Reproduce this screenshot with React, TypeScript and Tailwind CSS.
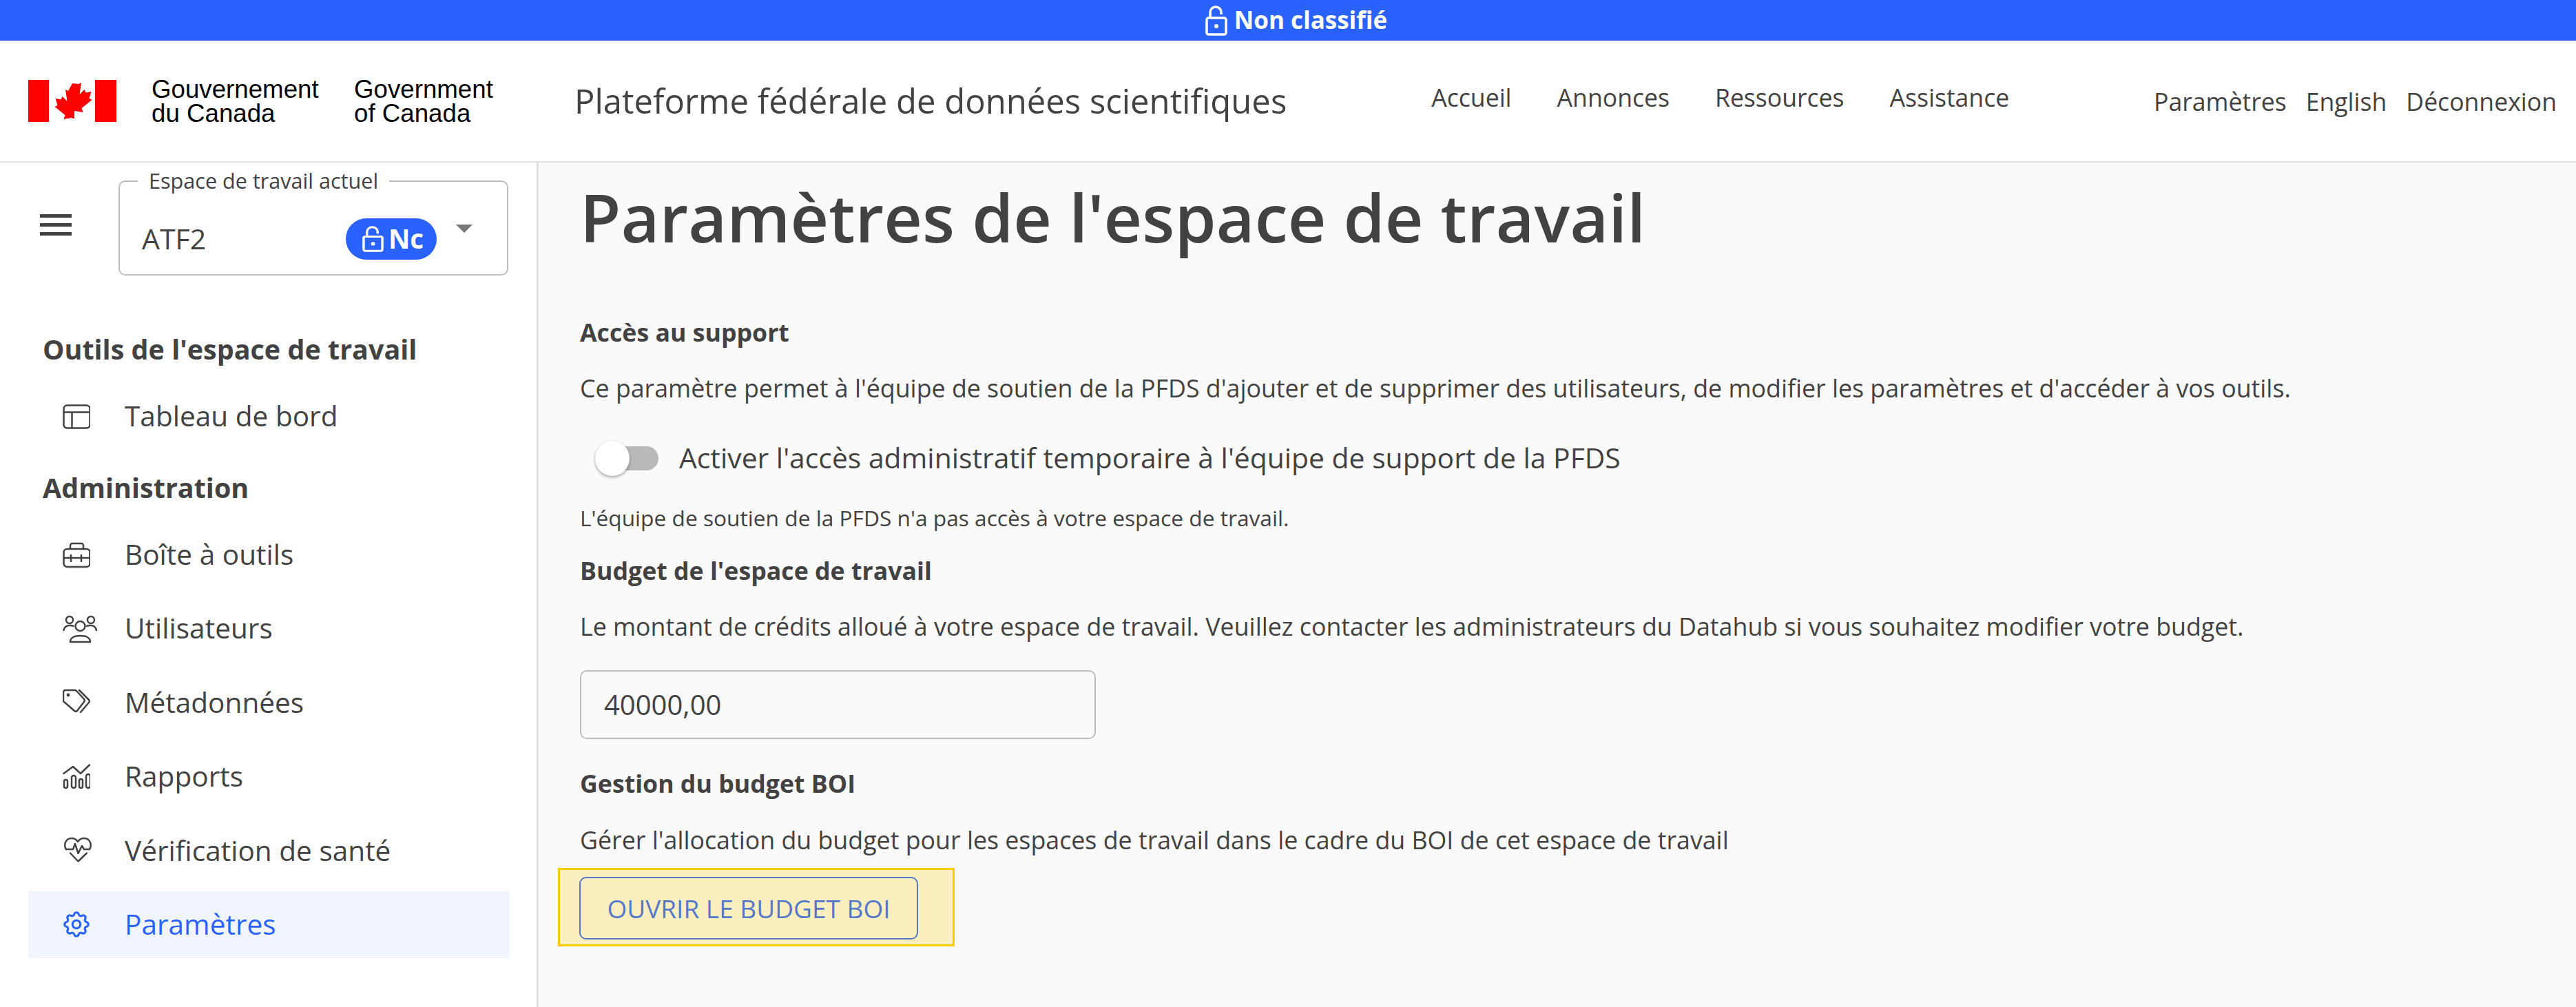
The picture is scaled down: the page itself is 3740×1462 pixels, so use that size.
import React from 'react';
import { TbSettings } from 'react-icons/tb';

const OPEN = '"Open Sans", "Noto Sans", sans-serif';
const ARIAL = '"Liberation Sans", Arial, sans-serif';

const NavLink = ({ label }: { label: string }) => (
  <a className="text-[35.600px] text-[#424242]">{label}</a>
);

const LockIcon = ({ w, h }: { w: number; h: number }) => (
  <svg width={w} height={h} viewBox="0 0 32 44" preserveAspectRatio="none" fill="none" stroke="currentColor" strokeWidth="3.500">
    <rect x="2" y="18" width="28" height="24" rx="2.500" />
    <path d="M7 18V10a8 8 0 0 1 16 0v3" />
    <circle cx="16" cy="30" r="3" fill="currentColor" stroke="none" />
  </svg>
);

const MapleFlag = () => (
  <svg width="128" height="61" viewBox="0 0 128 61" className="shrink-0">
    <rect x="0" y="0" width="30" height="61" fill="#ff0000" />
    <rect x="97" y="0" width="31" height="61" fill="#ff0000" />
    <path
      fill="#ff0000"
      d="M64 5l-6 11-4-2 2.500 17-7-7-2 4.500-8-1.500 3 10-4 2 15 12-2 6 12-2 .500 0V56h3V45l12.500 2-2-6 15-12-4-2 3-10-8 1.500-2-4.500-7 7 2.500-17-4 2z"
    />
  </svg>
);

const IconBox = ({ children, w = 40, h = 40 }: { children: React.ReactNode; w?: number; h?: number }) => (
  <svg width={w} height={h} viewBox={`0 0 ${w} ${h}`} fill="none" stroke="currentColor" strokeWidth="2.500" strokeLinecap="round" strokeLinejoin="round">
    {children}
  </svg>
);

const TableIcon = () => (
  <IconBox>
    <rect x="1.500" y="3.500" width="38" height="33" rx="5" />
    <path d="M1.500 13.500h38M13.500 13.500v23" />
  </IconBox>
);

const ToolboxIcon = () => (
  <IconBox>
    <rect x="1.500" y="11" width="38" height="26" rx="5" />
    <path d="M11 11V6a3 3 0 0 1 3-3h13a3 3 0 0 1 3 3v5M1.500 24h38M12 20v9M27 20v9" />
  </IconBox>
);

const UsersIcon = () => (
  <IconBox w={50} h={44}>
    <circle cx="10" cy="9" r="5" />
    <circle cx="41" cy="9" r="5" />
    <circle cx="25.500" cy="18" r="7" />
    <path d="M11 41c0-6 6-9 14.500-9s14.500 3 14.500 9zM1.500 24c1-5 5-7 9-7 2 0 4 .5 5 1M49 24c-1-5-5-7-9-7-2 0-4 .5-5 1" />
  </IconBox>
);

const TagsIcon = () => (
  <IconBox>
    <path d="M4 2h13a4 4 0 0 1 3 1l11 12a3 3 0 0 1 0 4L21 32a3 3 0 0 1-4 0L2 19a3 3 0 0 1-1-2V5a3 3 0 0 1 3-3z" />
    <path d="M24 2l14 14a3 3 0 0 1 0 4L26 34" />
    <circle cx="8" cy="9" r="1.200" fill="currentColor" />
  </IconBox>
);

const ReportsIcon = () => (
  <IconBox>
    <path d="M1.500 15L15 5l11 10L39 2.500" />
    <rect x="2" y="24" width="5" height="12" rx="2.500" />
    <rect x="13" y="18" width="6" height="18" rx="3" />
    <rect x="24" y="23" width="5" height="13" rx="2.500" />
    <rect x="34" y="16" width="6" height="20" rx="3" />
  </IconBox>
);

const HeartIcon = () => (
  <IconBox w={44} h={40}>
    <path d="M5 18C1 12 4 2 13 2c4 0 7 2 9 5 2-3 5-5 9-5 9 0 12 10 8 16h-8l-3-5-5.500 11L18 10l-3 8H5z" />
    <path d="M11 23.500L22.500 35.500 35 23.500" />
  </IconBox>
);

const SideItem = ({ label, icon, active }: { label: string; icon: React.ReactNode; active?: boolean }) => (
  <div className={`mb-[10.400px] flex h-[97px] items-center pl-[50px] ${active ? 'bg-[#f0f5ff] text-[#2962ff]' : 'text-[#424242]'}`}>
    <div className="flex w-[90px] items-center">{icon}</div>
    <span className="text-[40.600px]">{label}</span>
  </div>
);

const SideHeading = ({ label }: { label: string }) => (
  <div className="flex h-[48px] items-center pl-[21px] text-[39.500px] font-bold text-[#424242]">{label}</div>
);

export default function App() {
  return (
    <div className="flex h-[1462px] w-[3740px] flex-col overflow-hidden bg-white" style={{ fontFamily: OPEN }}>
      <div className="flex h-[59px] items-center justify-center gap-[10px] bg-[#2962ff] pl-[24px] text-[35px] font-bold text-white">
        <LockIcon w={32} h={44} />
        <span>Non classifié</span>
      </div>

      <header className="flex h-[177px] items-center border-b-[2px] border-[#e0e0e0] pl-[41px] pr-[28px]">
        <MapleFlag />
        <div className="ml-[51px] w-[294px] text-[36.700px] leading-[35px] text-black" style={{ fontFamily: ARIAL }}>
          Gouvernement<br />du Canada
        </div>
        <div className="w-[320px] text-[36.700px] leading-[35px] text-black" style={{ fontFamily: ARIAL }}>
          Government<br />of Canada
        </div>
        <div className="text-[49px] font-medium text-[#424242]">Plateforme fédérale de données scientifiques</div>
        <nav className="ml-[210px] flex gap-[66px] pb-[10px]">
          <NavLink label="Accueil" />
          <NavLink label="Annonces" />
          <NavLink label="Ressources" />
          <NavLink label="Assistance" />
        </nav>
        <div className="ml-auto flex gap-[28px] pt-[2px]">
          <NavLink label="Paramètres" />
          <NavLink label="English" />
          <NavLink label="Déconnexion" />
        </div>
      </header>

      <div className="flex flex-1">
        <aside className="w-[782px] shrink-0 border-r-[3px] border-[#e0e0e0] pl-[41px] pr-[40px] pt-[26px]">
          <div className="flex items-center">
            <div className="mb-[10px] ml-[17px] flex w-[46px] flex-col gap-[8px]">
              <div className="h-[5px] bg-[#424242]" />
              <div className="h-[5px] bg-[#424242]" />
              <div className="h-[5px] bg-[#424242]" />
            </div>
            <div className="relative ml-[68px] flex h-[138px] w-[566px] items-center rounded-[10px] border-2 border-[#bdbdbd] pl-[32px] pr-[50px] pt-[32px]">
              <span className="absolute left-[26px] top-[-22px] bg-white px-[16px] text-[30.600px] leading-[40px] text-[#424242]">Espace de travail actuel</span>
              <span className="flex-1 text-[41px] text-[#424242]">ATF2</span>
              <div className="flex h-[60px] w-[132px] items-center justify-center gap-[7px] rounded-full bg-[#2962ff] pl-[5px] text-[38.500px] font-bold text-white">
                <LockIcon w={31} h={38} />
                <span>Nc</span>
              </div>
              <svg width="24" height="12" viewBox="0 0 24 12" className="ml-[28px] mt-[-30px]">
                <path d="M0 0h24L12 12z" fill="#757575" />
              </svg>
            </div>
          </div>

          <div className="mt-[84px]">
            <SideHeading label="Outils de l'espace de travail" />
          </div>
          <div className="mt-[24px]">
            <SideItem label="Tableau de bord" icon={<TableIcon />} />
          </div>
          <div className="mb-[24px] mt-[32px]">
            <SideHeading label="Administration" />
          </div>
          <SideItem label="Boîte à outils" icon={<ToolboxIcon />} />
          <SideItem label="Utilisateurs" icon={<UsersIcon />} />
          <SideItem label="Métadonnées" icon={<TagsIcon />} />
          <SideItem label="Rapports" icon={<ReportsIcon />} />
          <SideItem label="Vérification de santé" icon={<HeartIcon />} />
          <SideItem label="Paramètres" icon={<TbSettings size={46} strokeWidth={1.6} className="-ml-[3px]" />} active />
        </aside>

        <main className="flex-1 bg-[#fafafa] pl-[60px] pt-[19px] text-[#424242]">
          <h1 className="text-[96.700px] font-semibold leading-[120px]">Paramètres de l'espace de travail</h1>

          <div className="mt-[83px] text-[35.700px] font-bold leading-[48px]">Accès au support</div>
          <p className="mt-[33px] text-[35.750px] leading-[48px]">
            Ce paramètre permet à l'équipe de soutien de la PFDS d'ajouter et de supprimer des utilisateurs, de modifier les paramètres et d'accéder à vos outils.
          </p>

          <div className="mt-[48px] flex h-[60px] items-center pl-[22px]">
            <div className="relative h-[35px] w-[92px] rounded-full bg-[#b9b9b9]">
              <div className="absolute left-0 top-[-8px] h-[51px] w-[50px] rounded-full bg-white shadow-[0_2px_4px_rgba(0,0,0,0.35)]" />
            </div>
            <span className="ml-[30px] text-[40.850px]">Activer l'accès administratif temporaire à l'équipe de support de la PFDS</span>
          </div>

          <p className="mt-[33px] text-[31.700px] leading-[48px]">L'équipe de soutien de la PFDS n'a pas accès à votre espace de travail.</p>

          <div className="mt-[28px] text-[35.700px] font-bold leading-[48px]">Budget de l'espace de travail</div>
          <p className="mt-[33px] text-[35.750px] leading-[48px]">
            Le montant de crédits alloué à votre espace de travail. Veuillez contacter les administrateurs du Datahub si vous souhaitez modifier votre budget.
          </p>

          <div className="mt-[40px] flex h-[100px] w-[749px] items-center rounded-[10px] border-2 border-[#bdbdbd] pl-[33px] text-[40px]">40000,00</div>

          <div className="mt-[40px] text-[35.700px] font-bold leading-[48px]">Gestion du budget BOI</div>
          <p className="mt-[34px] text-[35.750px] leading-[48px]">
            Gérer l'allocation du budget pour les espaces de travail dans le cadre du BOI de cet espace de travail
          </p>

          <div className="ml-[-32px] mt-[17px] w-[576px] border-[3px] border-[#ffcc00] bg-[#fbefc0] pb-[7px] pl-[28px] pt-[10px]">
            <button className="flex h-[91px] w-[492px] items-center justify-center rounded-[10px] border-2 border-[#5578c8] text-[37px] font-medium text-[#5578c8]">
              OUVRIR LE BUDGET BOI
            </button>
          </div>
        </main>
      </div>
    </div>
  );
}
